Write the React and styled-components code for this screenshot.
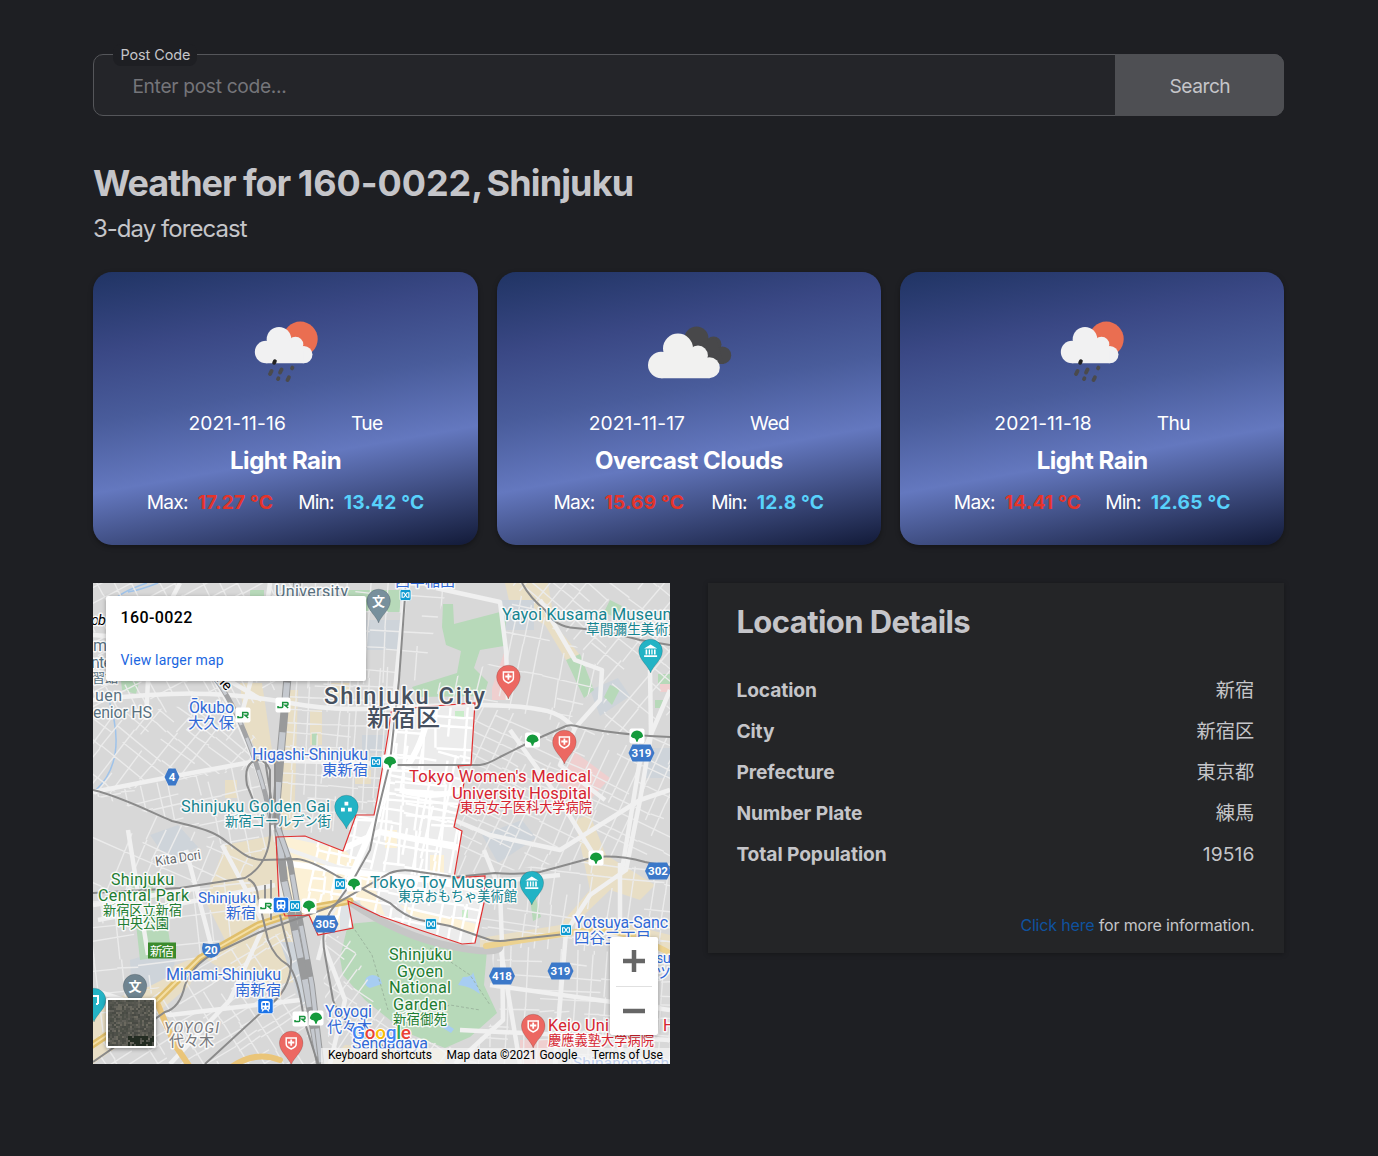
import React from "react";
import styled, { createGlobalStyle } from "styled-components";

const ui = `Inter, "Noto Sans CJK JP", sans-serif`;
const mapFont = `Roboto, "Noto Sans CJK JP", sans-serif`;

const GlobalStyle = createGlobalStyle`
  *, *::before, *::after { box-sizing: border-box; }
  body {
    margin: 0;
    min-height: 100vh;
    background: #1e1f23;
    color: #c5c5c9;
    font-family: ${ui};
    font-size: 19.2px;
    -webkit-font-smoothing: antialiased;
  }
  h1, h2, h3, p, dl, dd, dt { margin: 0; }
`;

const Page = styled.main`
  display: flow-root;
  width: 1191px;
  margin: 0 0 0 93.4px;
  padding-top: 54px;
`;

/* ---------- search ---------- */
const SearchForm = styled.form`
  position: relative;
  display: flex;
  height: 62px;
  border: 1px solid #55565a;
  border-radius: 10px;
  background: #242529;
`;
const Legend = styled.label`
  position: absolute;
  top: -11px;
  left: 19px;
  height: 22px;
  padding: 0 7px;
  border-radius: 8px;
  background: #1e1f23;
  font-size: 14.4px;
  line-height: 22px;
  letter-spacing: -0.05px;
`;
const Input = styled.input`
  flex: 1;
  min-width: 0;
  padding: 2px 38px 0;
  border: 0;
  outline: 0;
  background: transparent;
  color: inherit;
  font: 19.2px ${ui};
  letter-spacing: -0.32px;
  &::placeholder { color: #75757a; opacity: 1; }
`;
const SearchButton = styled.button`
  width: 169px;
  margin: -1px -1px -1px 0;
  padding: 2px 0 0;
  border: 0;
  border-radius: 0 10px 10px 0;
  background: #4e4f53;
  color: #c5c5c9;
  font: 19.2px ${ui};
  letter-spacing: -0.5px;
`;

/* ---------- heading ---------- */
const Heading = styled.header`
  padding-top: 44px;
`;
const Title = styled.h1`
  margin-left: -0.5px;
  font-size: 36px;
  line-height: 46px;
  font-weight: 700;
  letter-spacing: -1.05px;
`;
const PostCode = styled.span`
  letter-spacing: -0.05px;
`;
const Place = styled.span`
  letter-spacing: -0.85px;
  word-spacing: -2.5px;
`;
const Subtitle = styled.p`
  margin: 8px 0 0 -0.5px;
  font-size: 24px;
  line-height: 30px;
  letter-spacing: -0.95px;
`;

/* ---------- forecast ---------- */
const Forecast = styled.section`
  display: grid;
  grid-template-columns: repeat(3, 1fr);
  gap: 19px;
  margin-top: 28.4px;
`;
const Card = styled.article`
  display: flex;
  flex-direction: column;
  align-items: center;
  height: 272.6px;
  padding-top: 30.6px;
  border-radius: 19px;
  background: linear-gradient(170deg, #203464 0%, #3a4885 24%, #495c9b 44%, #6478bf 65%, #121a38 100%);
  box-shadow: 0 2px 5px rgba(0, 0, 0, 0.35);
  color: #fff;
`;
const WeatherIcon = styled.svg`
  width: 96px;
  height: 96px;
`;
const DateRow = styled.div`
  display: flex;
  gap: 65px;
  margin-top: 12px;
  line-height: 24px;
`;
const DateText = styled.span`
  letter-spacing: 0.12px;
`;
const DayText = styled.span`
  letter-spacing: -0.6px;
`;
const Condition = styled.h3`
  margin-top: 11px;
  font-size: 24px;
  line-height: 30px;
  font-weight: 700;
  letter-spacing: -0.45px;
`;
const Temps = styled.div`
  display: flex;
  gap: ${(p) => p.$gap}px;
  margin-top: 14px;
  line-height: 24px;
`;
const Temp = styled.span`
  display: flex;
  gap: 10px;
  letter-spacing: -0.8px;
`;
const Degrees = styled.strong`
  color: ${(p) => (p.$hot ? "#e5342a" : "#58d1fb")};
  font-weight: 700;
  letter-spacing: 0.2px;
`;

/* ---------- lower section ---------- */
const Lower = styled.section`
  display: grid;
  grid-template-columns: 1fr 1fr;
  gap: 38px;
  align-items: start;
  margin-top: 38px;
`;
const Details = styled.section`
  height: 370px;
  padding: 19.6px 30px 0 28.5px;
  background: #242527;
  box-shadow: 0 1px 5px rgba(0, 0, 0, 0.3);
`;
const DetailsTitle = styled.h2`
  font-size: 31px;
  line-height: 38px;
  font-weight: 700;
  letter-spacing: -0.58px;
`;
const DetailList = styled.dl`
  display: grid;
  grid-auto-rows: 40.9px;
  align-items: center;
  margin-top: 29.2px;
`;
const DetailRow = styled.div`
  display: flex;
  justify-content: space-between;
  line-height: 24px;
`;
const Term = styled.dt`
  font-weight: 700;
  letter-spacing: -0.08px;
`;
const Value = styled.dd`
  letter-spacing: 0.1px;
`;
const MoreInfo = styled.p`
  margin-top: 39.4px;
  text-align: right;
  font-size: 16px;
  line-height: 22px;
  letter-spacing: -0.17px;
`;
const Link = styled.a`
  color: #0f529f;
  text-decoration: none;
`;

/* ---------- map ---------- */
const MapFrame = styled.div`
  position: relative;
  height: 481px;
  overflow: hidden;
  background: #d9d9d9;
  font-family: ${mapFont};
  color: #000;
`;
const MapDrawing = styled.svg`
  display: block;
  width: 577px;
  height: 481px;
  font-family: ${mapFont};
`;
const InfoCard = styled.div`
  position: absolute;
  top: 13px;
  left: 12.6px;
  width: 260px;
  height: 85px;
  padding: 12px 14.5px;
  border-radius: 2px;
  background: #fff;
  box-shadow: 0 1px 4px rgba(0, 0, 0, 0.3);
`;
const InfoTitle = styled.div`
  font-size: 16px;
  font-weight: 500;
  line-height: 20px;
  letter-spacing: 0.4px;
`;
const InfoLink = styled.a`
  display: block;
  margin-top: 23px;
  color: #1a66e0;
  font-size: 14px;
  line-height: 18px;
  letter-spacing: 0.18px;
`;
const ZoomControl = styled.div`
  position: absolute;
  right: 12px;
  bottom: 29px;
  width: 48px;
  height: 98px;
  display: grid;
  grid-template-rows: 1fr 1fr;
  border-radius: 2px;
  background: #fff;
  box-shadow: 0 1px 4px rgba(0, 0, 0, 0.3);
`;
const ZoomButton = styled.span`
  display: grid;
  place-items: center;
  margin: 0 6px;
  & + & { border-top: 1px solid #e0e0e0; }
`;
const Thumbnail = styled.div`
  position: absolute;
  left: 13px;
  bottom: 16px;
  width: 50px;
  height: 50px;
  border: 2px solid #fff;
  border-radius: 2px;
  box-shadow: 0 1px 4px rgba(0, 0, 0, 0.4);
  svg { display: block; }
`;
const Attribution = styled.div`
  position: absolute;
  right: 0;
  bottom: 0;
  display: flex;
  justify-content: space-between;
  width: 349px;
  height: 16px;
  padding: 0 7px;
  background: rgba(245, 245, 245, 0.72);
  font-size: 12px;
  line-height: 15px;
  white-space: nowrap;
`;

function createRandom(seed) {
  let s = seed;
  return () => {
    s = (s * 16807) % 2147483647;
    return s / 2147483647;
  };
}

/* A district is a clipped, rotated grid of irregular side streets. */
function streetGrid({ cx, cy, r, angle, sx, sy, seed }) {
  const rnd = createRandom(seed);
  let d = "";
  for (let x = -r; x < r; x += sx * (0.6 + rnd() * 0.8)) {
    let y = -r;
    while (y < r) {
      const len = sy * (2 + Math.floor(rnd() * 5));
      if (rnd() > 0.22) d += `M${x.toFixed(1)} ${y.toFixed(1)}l${(rnd() * 4 - 2).toFixed(1)} ${len.toFixed(1)}`;
      y += len;
    }
  }
  for (let y = -r; y < r; y += sy * (0.6 + rnd() * 0.8)) {
    let x = -r;
    while (x < r) {
      const len = sx * (1 + Math.floor(rnd() * 4));
      if (rnd() > 0.3) d += `M${x.toFixed(1)} ${y.toFixed(1)}l${len.toFixed(1)} ${(rnd() * 4 - 2).toFixed(1)}`;
      x += len;
    }
  }
  return { d, transform: `translate(${cx} ${cy}) rotate(${angle})` };
}

const districts = [
  { poly: "93,583 300,583 286,700 93,720", cx: 190, cy: 650, r: 150, angle: 62, sx: 15, sy: 13, seed: 11 },
  { poly: "93,717 232,700 272,765 93,795", cx: 180, cy: 750, r: 120, angle: 38, sx: 14, sy: 12, seed: 21 },
  { poly: "93,795 262,762 277,840 255,860 170,820 93,795", cx: 190, cy: 810, r: 120, angle: -12, sx: 14, sy: 12, seed: 31 },
  { poly: "93,795 170,820 255,860 248,880 93,893", cx: 150, cy: 850, r: 110, angle: 24, sx: 20, sy: 17, seed: 41 },
  { poly: "93,893 248,880 275,920 200,955 93,1040", cx: 180, cy: 930, r: 130, angle: -7, sx: 21, sy: 19, seed: 51 },
  { poly: "93,1040 210,955 290,930 318,1064 93,1064", cx: 210, cy: 1010, r: 140, angle: -32, sx: 13, sy: 11, seed: 61 },
  { poly: "286,683 400,665 380,800 350,830 278,835", cx: 330, cy: 750, r: 110, angle: 3, sx: 10, sy: 12, seed: 71 },
  { poly: "300,583 450,583 440,610 420,680 286,690", cx: 360, cy: 640, r: 110, angle: 4, sx: 17, sy: 16, seed: 81 },
  { poly: "510,583 670,583 670,735 605,735 602,670 560,625", cx: 610, cy: 655, r: 120, angle: 40, sx: 14, sy: 13, seed: 91 },
  { poly: "420,690 500,660 515,590 602,670 572,725 480,703", cx: 520, cy: 670, r: 110, angle: 12, sx: 19, sy: 14, seed: 101 },
  { poly: "473,705 572,725 670,737 670,860 595,857 454,880", cx: 560, cy: 800, r: 150, angle: 25, sx: 14, sy: 12, seed: 111 },
  { poly: "484,903 455,878 595,857 670,863 670,955 480,946", cx: 570, cy: 905, r: 130, angle: 7, sx: 17, sy: 12, seed: 121 },
  { poly: "490,945 670,955 670,1064 460,1064 500,1012", cx: 580, cy: 1000, r: 130, angle: 3, sx: 15, sy: 14, seed: 131 },
  { poly: "320,930 350,940 390,1030 460,1050 460,1064 330,1064", cx: 370, cy: 1010, r: 110, angle: 35, sx: 12, sy: 14, seed: 141 },
];

const ward =
  "M391 712L420 707L475 703L471 765L458 766L464 783L454 827L462 831L454 878L485 876L484 903L475 943L462 944L420 930L380 916L348 901L353 928L318 935L309 915L285 916L279 900L276 837L305 836L343 851L356 815L374 815L377 800L388 735Z";

const innerDistricts = [
  { cx: 425, cy: 755, r: 80, angle: 4, sx: 13, sy: 12, seed: 12 },
  { cx: 420, cy: 850, r: 100, angle: 11, sx: 11, sy: 9, seed: 22 },
];

const avenues = [
  "M93 700C170 692 220 690 290 703S400 704 480 705S560 716 575 728",
  "M93 792L170 777L262 760L390 764",
  "M215 680C235 712 262 770 274 830",
  "M270 583L262 640L240 720",
  "M93 635L160 640L262 700",
  "M180 583L150 640L146 720",
  "M406 583L394 700L378 815L352 882L330 915L318 960",
  "M436 588L500 602L506 650L508 700",
  "M540 600L575 660L602 670L600 700L575 728L560 765L605 800",
  "M650 670L651 735L640 800L626 870L590 895L566 932L555 1064",
  "M670 690L640 760L622 870",
  "M454 820L490 835L560 850L640 800L670 790",
  "M595 857L560 800L510 730",
  "M484 850L500 890L502 945L503 1020L455 1064",
  "M276 845L340 868L470 884L560 875",
  "M620 863L620 1064",
  "M93 905L200 888M128 830L148 955M186 850L215 960M222 845L262 920M98 920L275 885",
  "M93 990L170 1015L300 1000",
  "M170 1064L230 1000L262 930",
  "M330 1064L345 1000L322 940",
  "M500 945L520 1064M460 1030L670 1040M490 985L670 1010",
];

const metroLines = [
  "M93 790C125 798 150 812 172 821C205 829 215 832 227 842L242 853Q250 859 262 860L297 859Q310 860 337 876L390 903Q405 917 420 920L450 926L490 940Q500 942 510 940L566 934",
  "M258 812L247 785Q243 762 258 760Q266 760 270 770L270 835Q268 865 245 878L180 888L93 893",
  "M248 879Q257 883 258 897L268 940Q275 958 288 965Q298 975 304 1020L318 1064",
  "M406 583L399 680L390 762L377 815L370 850L352 882L330 912Q320 930 325 955L333 1000Q345 1035 395 1050",
  "M390 765L480 765Q488 764 500 757L532 741L566 726Q572 724 580 727Q620 735 670 737",
  "M522 583Q530 598 545 610Q555 627 575 628Q605 630 640 640L670 645",
  "M93 1062L165 1012Q180 1008 185 985Q195 960 222 950L260 932L330 907L390 873Q402 868 420 872L455 877L495 873Q520 875 540 872L595 857Q620 855 645 862L670 867",
  "M205 1064L265 1009Q292 990 291 960L280 915",
];

const halo = { stroke: "#fff", strokeWidth: 3, strokeOpacity: 0.85, paintOrder: "stroke", strokeLinejoin: "round" };

const tones = {
  station: "#3169d6",
  place: "#158490",
  hospital: "#d62430",
  park: "#1e7d32",
  school: "#587180",
  city: "#46505f",
  area: "#77797d",
};

/* [text, x, baseline, width, tone, size, weight, style] */
const labels = [
  ["University", 275, 597, 73, "school", 16],
  ["ob", 91, 625, 15, "black", 14.5, 400, "italic"],
  ["m", 93, 651, 13, "school", 16],
  ["nte", 91, 668, 21, "school", 16],
  ["習館", 92, 682, 26, "school", 13],
  ["uen", 95, 701, 27, "school", 16],
  ["enior HS", 93, 718, 59, "school", 16],
  ["Ōkubo", 189, 713, 45, "station", 16],
  ["大久保", 188, 728, 46, "station", 15.3],
  ["Higashi-Shinjuku", 252, 760, 116, "station", 16],
  ["東新宿", 322, 775, 46, "station", 15.3],
  ["Shinjuku Golden Gai", 181, 812, 149, "place", 16.3],
  ["新宿ゴールデン街", 225, 826, 106, "place", 13.5],
  ["Shinjuku City", 324, 704, 161, "city", 23.5, 500],
  ["新宿区", 367, 726, 73, "city", 24, 500],
  ["Yayoi Kusama Museum", 502, 620, 175, "place", 16.6],
  ["草間彌生美術館", 586, 634, 96, "place", 13.7],
  ["西早稲田", 395, 586, 60, "station", 15],
  ["Tokyo Women's Medical", 409, 782, 182, "hospital", 16.6],
  ["University Hospital", 452, 799, 139, "hospital", 16.6],
  ["東京女子医科大学病院", 460, 812, 132, "hospital", 13.3],
  ["Tokyo Toy Museum", 370, 888, 147, "place", 16.6],
  ["東京おもちゃ美術館", 398, 901, 119, "place", 13.3],
  ["Shinjuku", 111, 885, 63, "park", 16],
  ["Central Park", 98, 901, 91, "park", 16],
  ["新宿区立新宿", 103, 915, 79, "park", 13.3],
  ["中央公園", 117, 928, 52, "park", 13.3],
  ["Shinjuku", 198, 903, 58, "station", 15.5],
  ["新宿", 226, 918, 30, "station", 15],
  ["Minami-Shinjuku", 166, 980, 115, "station", 16],
  ["南新宿", 235, 995, 46, "station", 15.3],
  ["YOYOGI", 164, 1033, 55, "area", 14.5, 400, "italic"],
  ["代々木", 169, 1046, 45, "area", 15],
  ["Yoyogi", 325, 1017, 47, "station", 16],
  ["代々木", 327, 1032, 45, "station", 15],
  ["Sendagaya", 352, 1049, 76, "station", 16],
  ["Shinjuku", 389, 960, 63, "park", 16.3],
  ["Gyoen", 397, 977, 46, "park", 16],
  ["National", 389, 993, 62, "park", 16.3],
  ["Garden", 393, 1010, 54, "park", 16.3],
  ["新宿御苑", 393, 1024, 54, "park", 13.5],
  ["Yotsuya-Sanc", 574, 928, 94, "station", 16],
  ["四谷三丁目", 574, 943, 77, "station", 15.3],
  ["Keio Uni", 548, 1031, 61, "hospital", 16.3],
  ["H", 663, 1031, 11, "hospital", 16],
  ["慶應義塾大学病院", 548, 1045, 106, "hospital", 13.3],
  ["su", 656, 963, 15, "station", 15],
  ["ツ", 656, 978, 15, "station", 15],
  ["Shinanomachi", 573, 1068, 100, "station", 15.5],
];

function MapLabel({ item }) {
  const [text, x, y, width, tone, size, weight = 400, style = "normal"] = item;
  return (
    <text x={x} y={y} textLength={width} fontSize={size} fontWeight={weight} fontStyle={style} fill={tones[tone] || tone} {...halo}>
      {text}
    </text>
  );
}

function Glyph({ kind }) {
  if (kind === "hospital")
    return (
      <g>
        <path d="M-5-5H5V1Q5 4 0 6Q-5 4-5 1Z" fill="none" stroke="#fff" strokeWidth="1.5" />
        <path d="M0-3.5V2.8M-3.1-.5H3.1" stroke="#fff" strokeWidth="1.8" />
      </g>
    );
  if (kind === "museum")
    return (
      <path d="M-6.5-2.5L0-6.5L6.5-2.5ZM-5-1.5h1.6v5H-5zM-1.9-1.5h1.3v5h-1.3zM.7-1.5H2v5H.7zM3.4-1.5H5v5H3.4zM-6.5 4.2h13v1.8h-13z" fill="#fff" />
    );
  if (kind === "school")
    return (
      <text textAnchor="middle" y="5" fontSize="13" fontWeight="700" fill="#fff">
        文
      </text>
    );
  if (kind === "music") return <path d="M-3 5V-4H4V4M-3 5h-2M4 4H2" fill="none" stroke="#fff" strokeWidth="2" />;
  return <path d="M-1.9-5.3h3.8v3.8h-3.8zM-5.4 .8h3.8v3.8h-3.8zM1.6 .8h3.8v3.8H1.6z" fill="#fff" />;
}

const pins = [
  [378.6, 601, "school", "#78909c"],
  [135, 986, "school", "#6f8490"],
  [650.6, 651, "museum", "#23b3c5"],
  [508.4, 677, "hospital", "#ec6862"],
  [564.4, 742, "hospital", "#ec6862"],
  [533.2, 1026, "hospital", "#ec6862"],
  [291.2, 1043, "hospital", "#ec6862"],
  [346.4, 807, "dots", "#23b3c5"],
  [531.8, 883, "museum", "#23b3c5"],
  [94, 1000, "music", "#23b3c5"],
];

const shields = [
  [172, 777, "4", 15],
  [641.5, 753, "319", 26],
  [658, 871, "302", 26],
  [325.5, 924, "305", 26],
  [502, 976, "418", 26],
  [560.5, 971, "319", 26],
];

const transit = [
  ...[[532.5, 740], [637, 736], [390, 762], [596, 858], [354, 884], [309, 906], [316, 1018]].map((p) => ["leaf", ...p]),
  ...[[283, 705], [243, 715], [266, 906], [300, 1019]].map((p) => ["jr", ...p]),
  ...[[405.5, 595], [376, 762], [340, 884], [295, 906], [431, 924], [566, 930]].map((p) => ["metro", ...p]),
  ...[[281, 905], [265.5, 1006]].map((p) => ["train", ...p]),
];

function TransitMark({ kind, x, y }) {
  return (
    <g transform={`translate(${x} ${y})`}>
      {kind === "leaf" && (
        <g>
          <rect x="-7.5" y="-7.5" width="15" height="15" rx="2" fill="#fff" />
          <path d="M-6.2 .2Q-5-5.5 0-5.6Q5-5.5 6.2 .2Q4.6 2.2 2.8 2.2Q1.3 2.2 .7 5.8H-.7Q-1.3 2.2-2.8 2.2Q-4.6 2.2-6.2 .2Z" fill="#159a3c" />
        </g>
      )}
      {kind === "jr" && (
        <g>
          <rect x="-7.5" y="-7.5" width="15" height="15" rx="2" fill="#fff" />
          <path d="M-5 1V2.6H-1.2Q-.3 2.6-.3 1.6V-2.4H4.2Q5 -2.4 5-1.5V-.7Q5 .2 4.2 .2H2L5.2 3" fill="none" stroke="#16923c" strokeWidth="1.5" />
        </g>
      )}
      {kind === "metro" && (
        <g>
          <rect x="-5.5" y="-5.5" width="11" height="11" rx="1.5" fill="#0d9ad1" stroke="#fff" strokeWidth=".8" />
          <path d="M-3.4-2.2V2.2H-1.6L1.6-2.2H3.4V2.2H1.6L-1.6-2.2Z" fill="none" stroke="#fff" strokeWidth="1.1" />
        </g>
      )}
      {kind === "train" && (
        <g>
          <rect x="-7.7" y="-7.7" width="15.4" height="15.4" rx="2" fill="#1a73e8" stroke="#fff" strokeWidth=".8" />
          <path d="M-4.4-3Q-4.4-5-2-5H2Q4.4-5 4.4-3V2.6Q4.4 3.8 3 3.8L4 5.5H2.5L1.5 3.8H-1.5L-2.5 5.5H-4L-3 3.8Q-4.4 3.8-4.4 2.6Z" fill="#fff" />
          <path d="M-3-3H-.5V-.4H-3ZM.5-3H3V-.4H.5ZM-2.8 1.2h1.5v1.5h-1.5zM1.3 1.2h1.5v1.5H1.3z" fill="#1a73e8" />
        </g>
      )}
    </g>
  );
}

function CityMap() {
  return (
    <MapDrawing viewBox="93 583 577 481">
      <defs>
        {districts.map((d, i) => (
          <clipPath id={`district-${i}`} key={i}>
            <polygon points={d.poly} />
          </clipPath>
        ))}
        <clipPath id="ward">
          <path d={ward} />
        </clipPath>
      </defs>
      <rect x="93" y="583" width="578" height="481" fill="#d8d8d8" />

      {/* land use */}
      <g fill="#e8dec5">
        <path d="M240 683L262 683L272 750L265 765L245 730ZM286 690L298 690L294 830L278 830ZM225 845L276 835L285 915L225 940L205 900ZM200 955L290 920L312 980L270 985L215 965ZM505 583L548 583L555 625L580 655L572 670L545 625L510 605ZM575 820L590 815L606 855L655 885L640 900L610 890L560 938L480 948L480 938L560 925L590 890ZM93 1015L160 972L200 955L190 985L120 1045L93 1064Z" />
        <path d="M310 710h12v35h-12zM330 683h20v14h-20zM355 770h16v14h-16zM225 780h12v18h-12zM630 925l40 10v20l-45-12zM345 1045l100 5v14h-120z" />
      </g>
      <g fill="#ced4da">
        <path d="M340 620h60v30h-60zM362 735h24v18h-24zM130 960l48-15l-6 30l-40 20zM482 835l40-15l14 18l-38 25zM590 690l28-12l12 18l-30 20zM150 835l28-10l20 22l-30 14zM500 600h34v30h-30zM280 942l24 0l10 55l-12 10zM645 748h25v30h-25z" />
      </g>
      <g fill="#b7d9b9">
        <path d="M348 924L380 921L440 947L487 950L484 985L497 1013L470 1037L445 1048L405 1032L365 1000L343 975L340 958Z" />
        <path d="M443 604h10l1 20l46-12l6 8l-2 26l-24 4l-6 18l14 14l-4 14l-66 1l-6-10l45-14l4-22l-15-6l-4-18z" />
        <path d="M135 915L165 910L172 955L140 960ZM130 880l20-4l6 22l-22 4zM345 590h55v22h-40zM121 680l18 2l-3 12l-14-4zM566 660l14-6l14 36l-10 8zM535 895l6 22l-8 4l-3-22zM610 685l10 4l-8 16l-8-8zM250 590h14v10h-14zM312 733h5v12h-5zM610 600l12 6l-6 12l-12-6zM658 674h12v10h-12zM655 700h8v8h-8z" />
      </g>
      <path d="M505 650L510 700L492 700L492 688ZM575 752L610 778L590 800L560 785ZM660 684h10v8h-10zM520 1040h30v24h-30z" fill="#efcfcf" />
      <path d="M463 977q10 0 10-5l4 12l3 10q-10-8-22-9zM380 978q-8-6-14 0q-3 8 4 10l12-4zM440 1020l14 9l-3 4l-14-9z" fill="#a7cdf2" />
      <path d="M147 583Q120 592 112 602M109 700Q128 760 96 790M158 583Q140 590 128 592" fill="none" stroke="#9fc3ea" strokeWidth="1.5" />
      <path d="M355 930L372 955L388 1010M430 948L470 975L490 1005M400 1025L450 1005L480 1010" fill="none" stroke="#96ad98" strokeWidth=".8" strokeDasharray="3 2" />

      {/* side streets */}
      {districts.map((d, i) => {
        const grid = streetGrid(d);
        return (
          <g key={i} clipPath={`url(#district-${i})`}>
            <path {...grid} fill="none" stroke="#ebebeb" strokeWidth="1.4" />
          </g>
        );
      })}

      {/* highlighted ward */}
      <path d={ward} fill="#ececec" />
      <g clipPath="url(#ward)">
        <path d="M276 835L345 850L372 880L385 916L350 900L353 930L285 915ZM385 830h12v18h-12zM430 855h14v20h-14zM400 905L480 925V935L410 915Z" fill="#fcf1d6" />
        <path d="M455 711h9v8h-9zM462 910h6v10h-6z" fill="#c9ecc9" />
        <path d="M340 905l20-5l4 30l-24 5z" fill="#dfe3e6" />
        {innerDistricts.map((d) => {
          const grid = streetGrid(d);
          return <path key={d.seed} {...grid} fill="none" stroke="#fff" strokeWidth="2.4" />;
        })}
      </g>

      <g fill="none" stroke="#f0f0f0" strokeWidth="4.5" strokeLinejoin="round">
        {avenues.map((d) => (
          <path key={d} d={d} />
        ))}
      </g>
      <g clipPath="url(#ward)" fill="none" stroke="#fff" strokeWidth="6">
        <path d="M340 850L380 832L470 850M400 704L378 815L345 890M276 862L350 872L470 884M400 790Q430 800 462 790M430 704Q425 740 408 765" />
      </g>
      <path d="M350 902Q400 936 450 946T500 946" fill="none" stroke="#c6c6c6" strokeWidth="7" />

      {/* trunk roads */}
      <g fill="none" strokeLinecap="round">
        <path d="M85 1050L155 1003L200 958L258 925L310 908L350 901" stroke="#e0bf6c" strokeWidth="7" />
        <path d="M85 1050L155 1003L200 958L258 925L310 908L350 901" stroke="#f4dfa5" strokeWidth="2" />
        <path d="M486 946L530 939L600 928L640 938L680 958" stroke="#ecd290" strokeWidth="6" />
        <path d="M158 1005L175 1045L192 1070M230 1068Q255 1050 280 1060" stroke="#eac579" strokeWidth="6" />
      </g>

      {/* railways */}
      <g fill="none">
        <path d="M215 678C238 708 262 770 272 825" stroke="#a2a3a5" strokeWidth="5" />
        <path d="M215 678C238 708 262 770 272 825" stroke="#c9ccd1" strokeWidth="3" strokeDasharray="20 14" />
        <path d="M297 583L287 683L281 750L276 810L284 880L294 925L306 985L321 1070" stroke="#999a9b" strokeWidth="8" />
        <path d="M297 583L287 683L281 750L276 810L284 880L294 925L306 985L321 1070" stroke="#c5c9cf" strokeWidth="6" strokeDasharray="28 22" />
        <path d="M277 825L290 862L300 920L312 985L322 1070" stroke="#999a9b" strokeWidth="6" />
        <path d="M277 825L290 862L300 920L312 985L322 1070" stroke="#c5c9cf" strokeWidth="4" strokeDasharray="34 18" />
        <path d="M275 752V828M265 760L273 810M271 880V920M265 885V912" stroke="#8f8f8f" strokeWidth="2" />
        {metroLines.map((d) => (
          <path key={d} d={d} stroke="#8b8b8b" strokeWidth="2" />
        ))}
      </g>
      <path d={ward} fill="none" stroke="#e03131" strokeWidth="1.2" />

      {labels.map((item, i) => (
        <MapLabel key={i} item={item} />
      ))}
      <text x="156" y="866" textLength="46" fontSize="13" fill="#64686c" transform="rotate(-9 156 866)" {...halo}>
        Kita Dori
      </text>
      <text x="216" y="680" fontSize="14" transform="rotate(48 216 680)" {...halo}>
        ne
      </text>

      <rect x="148" y="942.5" width="28" height="16" fill="#3b8b2d" />
      <text x="150" y="955.5" fontSize="12.5" textLength="24" fill="#fff">
        新宿
      </text>

      {shields.map(([x, y, text, w]) => (
        <g key={text + x} transform={`translate(${x} ${y})`}>
          <path d={`M${-w / 2} 0L${-w / 2 + 4}-8.5H${w / 2 - 4}L${w / 2} 0L${w / 2 - 4} 8.5H${-w / 2 + 4}Z`} fill="#3b78c9" />
          <text textAnchor="middle" y="4" fontSize="11.5" fontWeight="700" fill="#fff">
            {text}
          </text>
        </g>
      ))}
      <path d="M203 943Q211 945 219 943L220.5 948Q220 956 211 958Q202 956 202 948Z" fill="#3b78c9" />
      <text x="211" y="954" textAnchor="middle" fontSize="11.5" fontWeight="700" fill="#fff">
        20
      </text>

      {transit.map(([kind, x, y]) => (
        <TransitMark key={`${x}-${y}`} kind={kind} x={x} y={y} />
      ))}
      {pins.map(([x, y, kind, color]) => (
        <g key={`${x}-${y}`} transform={`translate(${x} ${y})`}>
          <path d="M0 22C-2 15-11.8 9-11.8 0A11.8 11.8 0 1 1 11.8 0C11.8 9 2 15 0 22Z" fill={color} stroke="#00000030" strokeWidth=".8" />
          <Glyph kind={kind} />
        </g>
      ))}

      <text x="352" y="1039" fontSize="19" fontWeight="500" textLength="59" stroke="#fff" strokeWidth="2" paintOrder="stroke">
        <tspan fill="#4285f4">G</tspan>
        <tspan fill="#ea4335">o</tspan>
        <tspan fill="#fbbc05">o</tspan>
        <tspan fill="#4285f4">g</tspan>
        <tspan fill="#34a853">l</tspan>
        <tspan fill="#ea4335">e</tspan>
      </text>
    </MapDrawing>
  );
}

function SatelliteTile() {
  const rnd = createRandom(77);
  const palette = ["#4f504a", "#5a5a52", "#62615a", "#484a44", "#55564f", "#6b695f", "#4c4f47"];
  const cells = [];
  for (let y = 0; y < 46; y += 2)
    for (let x = 0; x < 46; x += 2) {
      const dark = x > 18 && y > 34 && rnd() > 0.3;
      cells.push(
        <rect key={`${x}-${y}`} x={x} y={y} width="2.5" height="2.5" fill={dark ? "#232c22" : palette[Math.floor(rnd() * 7)]} />
      );
    }
  return (
    <svg width="46" height="46">
      {cells}
    </svg>
  );
}

function RainIcon() {
  const drops = [
    [274, 362, 0.8, "#222"],
    [270.3, 372.5, 1.6, "#4a4a4c"],
    [280.3, 371, 1.6, "#4a4a4c"],
    [291.7, 368, 0.4, "#4a4a4c"],
    [277.7, 378.7, 0.4, "#4a4a4c"],
    [287.7, 378.7, 1.4, "#4a4a4c"],
  ];
  return (
    <WeatherIcon viewBox="237.5 303 96 96">
      <circle cx="299.8" cy="339" r="17.4" fill="#ea6e51" />
      <g fill="#f1f1f2">
        <circle cx="265.6" cy="352" r="11.3" />
        <circle cx="278.5" cy="339.2" r="12.3" />
        <circle cx="295" cy="344.5" r="7.8" />
        <circle cx="303.3" cy="354.6" r="8.7" />
        <path d="M265.6 345H300V351H303.3V363.3H265.6Z" />
      </g>
      {drops.map(([x, y, len, color]) => (
        <path key={x} d={`M${x + len * 0.5} ${y - len}L${x - len * 0.5} ${y + len}`} stroke={color} strokeWidth="3.8" strokeLinecap="round" />
      ))}
    </WeatherIcon>
  );
}

function CloudsIcon() {
  return (
    <WeatherIcon viewBox="641 303 96 96">
      <g fill="#48484a">
        <circle cx="696.5" cy="338.5" r="12" />
        <circle cx="713.5" cy="344.5" r="8" />
        <circle cx="722.5" cy="355.2" r="8.7" />
        <path d="M690 345L716 338L724 364H700Z" />
      </g>
      <g fill="#f1f1f0">
        <circle cx="661.2" cy="365" r="13.2" />
        <circle cx="678" cy="348.5" r="15" />
        <circle cx="698" cy="355.5" r="9.9" />
        <circle cx="709.3" cy="367.7" r="10.5" />
        <path d="M661.2 356H704V362H709.3V378.2H661.2Z" />
      </g>
    </WeatherIcon>
  );
}

const days = [
  { date: "2021-11-16", day: "Tue", text: "Light Rain", max: "17.27", min: "13.42", Icon: RainIcon, gap: 25 },
  { date: "2021-11-17", day: "Wed", text: "Overcast Clouds", max: "15.69", min: "12.8", Icon: CloudsIcon, gap: 27 },
  { date: "2021-11-18", day: "Thu", text: "Light Rain", max: "14.41", min: "12.65", Icon: RainIcon, gap: 24 },
];

const details = [
  ["Location", "新宿"],
  ["City", "新宿区"],
  ["Prefecture", "東京都"],
  ["Number Plate", "練馬"],
  ["Total Population", "19516"],
];

export default function App() {
  return (
    <>
      <GlobalStyle />
      <Page>
        <SearchForm>
          <Legend htmlFor="post-code">Post Code</Legend>
          <Input id="post-code" placeholder="Enter post code..." />
          <SearchButton type="button">Search</SearchButton>
        </SearchForm>

        <Heading>
          <Title>
            Weather for <PostCode>160-0022</PostCode>
            <Place>, Shinjuku</Place>
          </Title>
          <Subtitle>3-day forecast</Subtitle>
        </Heading>

        <Forecast>
          {days.map(({ date, day, text, max, min, Icon, gap }) => (
            <Card key={date}>
              <Icon />
              <DateRow>
                <DateText>{date}</DateText>
                <DayText>{day}</DayText>
              </DateRow>
              <Condition>{text}</Condition>
              <Temps $gap={gap}>
                <Temp>
                  Max: <Degrees $hot>{max} °C</Degrees>
                </Temp>
                <Temp>
                  Min: <Degrees>{min} °C</Degrees>
                </Temp>
              </Temps>
            </Card>
          ))}
        </Forecast>

        <Lower>
          <MapFrame>
            <CityMap />
            <InfoCard>
              <InfoTitle>160-0022</InfoTitle>
              <InfoLink>View larger map</InfoLink>
            </InfoCard>
            <Thumbnail>
              <SatelliteTile />
            </Thumbnail>
            <ZoomControl>
              <ZoomButton>
                <svg width="22" height="22">
                  <path d="M11 0V22M0 11H22" stroke="#666" strokeWidth="4.5" />
                </svg>
              </ZoomButton>
              <ZoomButton>
                <svg width="22" height="22">
                  <path d="M0 11H22" stroke="#666" strokeWidth="4.5" />
                </svg>
              </ZoomButton>
            </ZoomControl>
            <Attribution>
              <span>Keyboard shortcuts</span>
              <span>Map data ©2021 Google</span>
              <span>Terms of Use</span>
            </Attribution>
          </MapFrame>

          <Details>
            <DetailsTitle>Location Details</DetailsTitle>
            <DetailList>
              {details.map(([term, value]) => (
                <DetailRow key={term}>
                  <Term>{term}</Term>
                  <Value>{value}</Value>
                </DetailRow>
              ))}
            </DetailList>
            <MoreInfo>
              <Link>Click here</Link> for more information.
            </MoreInfo>
          </Details>
        </Lower>
      </Page>
    </>
  );
}
